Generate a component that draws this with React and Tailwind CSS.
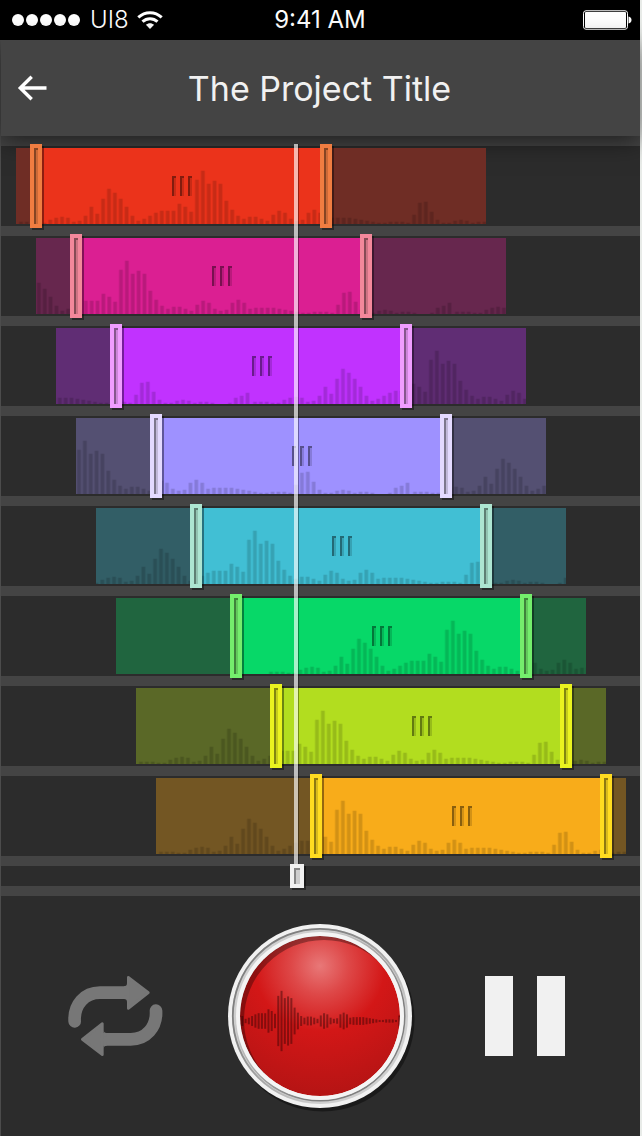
import React from "react";

const LEVELS = [
  2, 2, 2, 1, 1, 4, 6, 7, 6, 2, 3, 8, 17, 10, 25, 35, 31, 25, 17, 8, 3, 5, 8, 11, 13, 13, 13, 20, 17, 12,
  44, 53, 40, 43, 40, 23, 14, 8, 5, 7, 7, 5, 3, 9, 13, 11, 5, 3, 4, 11, 14, 11, 5, 6, 6, 6, 6, 5, 4, 3,
  2, 1, 1, 2, 2, 2, 1, 9, 21, 22, 12, 4, 1, 1, 3, 4, 3, 1, 2, 2, 1, 0, 0, 1, 6, 8, 11,
];
const BAR_PITCH = 88 / 15;
const LOOP_LENGTH = 512;
const CLIP_LENGTH = 470;

const TRACKS = [
  { name: "Track 1", start: 16, trim: 14, wave: 0, body: "bg-[#eb331b]", rest: "bg-[#6f2d25]", grip: "bg-[#f07d41]" },
  { name: "Track 2", start: 36, trim: 34, wave: -96, body: "bg-[#db1f92]", rest: "bg-[#67274e]", grip: "bg-[#f4889b]" },
  { name: "Track 3", start: 56, trim: 54, wave: -318, body: "bg-[#c132ff]", rest: "bg-[#602d74]", grip: "bg-[#f09dff]" },
  { name: "Track 4", start: 76, trim: 74, wave: -178, body: "bg-[#9e91ff]", rest: "bg-[#545072]", grip: "bg-[#e4daff]" },
  { name: "Track 5", start: 96, trim: 94, wave: -28, body: "bg-[#41bfd4]", rest: "bg-[#325e66]", grip: "bg-[#ade5d1]" },
  { name: "Track 6", start: 116, trim: 114, wave: 150, body: "bg-[#07d868]", rest: "bg-[#20653f]", grip: "bg-[#74ee6c]" },
  { name: "Track 7", start: 136, trim: 134, wave: 0, body: "bg-[#b2dd1f]", rest: "bg-[#5a6827]", grip: "bg-[#eaf31f]" },
  { name: "Track 8", start: 156, trim: 154, wave: 0, body: "bg-[#f8ac1a]", rest: "bg-[#735623]", grip: "bg-[#ffdc20]" },
];

function Waveform({ offset }) {
  const bars = [];
  for (let loop = 0; loop < 2; loop++) {
    LEVELS.forEach((level, i) => {
      const x = offset + loop * LOOP_LENGTH + 5 + i * BAR_PITCH;
      if (level > 0 && x > -3 && x < CLIP_LENGTH + 3) bars.push({ x, level });
    });
  }
  return (
    <svg className="absolute inset-0 h-full w-full" viewBox="0 0 470 76" aria-hidden="true">
      {bars.map(({ x, level }) => (
        <g key={x} fill="#000" fillOpacity="0.08">
          <rect x={x - 2.3} y={75.5 - level} width="4.6" height={level + 2} rx="1" />
          <rect x={x - 1.4} y={76 - level} width="2.8" height={level + 2} rx="0.5" />
        </g>
      ))}
    </svg>
  );
}

function TrimHandle({ label, color }) {
  return (
    <button
      type="button"
      aria-label={label}
      className={`h-[84px] w-3 p-1 shadow-[2px_2px_0_rgba(0,0,0,0.4)] ${color}`}
    >
      <span className="block h-full border-l-2 border-t-2 border-black/35 bg-black/15" />
    </button>
  );
}

function Track({ track }) {
  return (
    <li className="h-[90px] border-b-10 border-[#444] py-0.5">
      <div
        className={`relative z-20 h-[76px] w-[470px] ${track.rest}`}
        style={{ marginLeft: track.start - 1 }}
      >
        <div
          className={`absolute inset-y-0 w-[302px] ${track.body}`}
          style={{ left: track.trim }}
        />
        <Waveform offset={track.wave} />
        <div
          className="absolute -inset-y-1 flex w-[302px] items-center justify-between"
          style={{ left: track.trim }}
        >
          <TrimHandle label={`${track.name} start`} color={track.grip} />
          <button type="button" aria-label={`Move ${track.name}`} className="flex gap-1 pl-0.5">
            <span className="h-5 w-1 border-l-2 border-t-2 border-black/35 bg-black/15" />
            <span className="h-5 w-1 border-l-2 border-t-2 border-black/35 bg-black/15" />
            <span className="h-5 w-1 border-l-2 border-t-2 border-black/35 bg-black/15" />
          </button>
          <TrimHandle label={`${track.name} end`} color={track.grip} />
        </div>
      </div>
    </li>
  );
}

function StatusBar() {
  return (
    <div className="grid h-10 grid-cols-3 items-center bg-black text-2xl font-light text-white">
      <div className="flex items-center gap-2 pl-3">
        <div className="flex gap-0.5">
          {[0, 1, 2, 3, 4].map((dot) => (
            <span key={dot} className="h-3 w-3 rounded-full bg-white" />
          ))}
        </div>
        <span className="pl-0.5">UI8</span>
        <svg className="h-[18px] w-[26px]" viewBox="0 0 26 18" fill="none" stroke="#fff" strokeWidth="3" aria-label="Wi-Fi">
          <path d="M1.3 6.4C8 .1 18 .1 24.700 6.400" />
          <path d="M5.500 10.700C9.800 6.700 16.200 6.700 20.500 10.700" />
          <path d="M13 18 8.900 13.800C11.300 11.700 14.700 11.700 17.100 13.800Z" fill="#fff" stroke="none" />
        </svg>
      </div>
      <div className="text-center font-normal">9:41 AM</div>
      <div className="flex justify-end pr-2">
        <svg className="h-5 w-[50px]" viewBox="0 0 50 20" aria-label="Battery full">
          <rect x="1.500" y="0.750" width="44" height="18.500" rx="2.500" fill="none" stroke="#fff" strokeWidth="1" />
          <rect x="3" y="2" width="41" height="16" rx="1" fill="#fff" />
          <path d="M46.500 6.500C48.500 7 49.500 8.300 49.500 10S48.500 13 46.500 13.500Z" fill="#fff" />
        </svg>
      </div>
    </div>
  );
}

function LoopArrow(props) {
  return (
    <g {...props}>
      <path d="M104 214C101 164 134 128 180 128H264" fill="none" stroke="#777" strokeWidth="38" strokeLinecap="round" />
      <path d="M252 109Q261 109 261 100V120H252ZM252 147Q261 147 261 156V136H252Z" fill="#777" />
      <path d="M265 82 325 128 265 175Z" fill="#777" stroke="#777" strokeWidth="8" strokeLinejoin="round" />
    </g>
  );
}

function RecordDial() {
  return (
    <svg className="h-[184px] w-[184px] overflow-visible" viewBox="0 0 184 184" aria-hidden="true">
      <defs>
        <radialGradient id="dial" gradientUnits="userSpaceOnUse" cx="92" cy="42" r="130">
          <stop offset="0" stopColor="#e87878" />
          <stop offset="0.220" stopColor="#de4848" />
          <stop offset="0.500" stopColor="#d31717" />
          <stop offset="1" stopColor="#b51414" />
        </radialGradient>
        <linearGradient id="outer-edge" x1="0" y1="0" x2="1" y2="1">
          <stop offset="0.300" stopColor="#808080" />
          <stop offset="0.750" stopColor="#808080" stopOpacity="0" />
        </linearGradient>
        <linearGradient id="inner-edge" x1="0" y1="0" x2="1" y2="1">
          <stop offset="0.250" stopColor="#808080" stopOpacity="0" />
          <stop offset="0.700" stopColor="#808080" />
        </linearGradient>
        <clipPath id="face">
          <circle cx="92" cy="92" r="80" />
        </clipPath>
      </defs>
      <circle cx="94.500" cy="95.500" r="92" fill="#000" fillOpacity="0.400" />
      <circle cx="92" cy="92" r="92" fill="#f1f1f1" />
      <circle cx="92" cy="92" r="88" fill="#cfcfcf" />
      <circle cx="92" cy="92" r="87.200" fill="none" stroke="url(#outer-edge)" strokeWidth="1.800" />
      <circle cx="92" cy="92" r="84.600" fill="none" stroke="url(#inner-edge)" strokeWidth="1.800" />
      <circle cx="92" cy="92" r="84" fill="#f4f4f4" />
      <g clipPath="url(#face)">
        <circle cx="92" cy="92" r="80" fill="url(#dial)" />
        <path
          d="M-10-10H194V194H-10ZM176 96A80 80 0 1 0 16 96A80 80 0 1 0 176 96Z"
          fill="#000"
          fillOpacity="0.330"
          fillRule="evenodd"
        />
        <g fill="#1a0000" fillOpacity="0.400">
          {LEVELS.slice(19, 68).map((level, i) => (
            <rect
              key={i}
              x={13.300 + i * 3.270}
              y={97 - level * 0.560 - 0.500}
              width="2"
              height={level * 1.120 + 1}
            />
          ))}
        </g>
      </g>
    </svg>
  );
}

export default function App() {
  return (
    <div className="min-h-screen border-r-2 border-[#e8ebe8] bg-[#2c2c2c] font-['Inter','Liberation_Sans',sans-serif]">
      <StatusBar />
      <div className="border-l border-[#4c4c4c]">
        <header className="relative z-10 grid h-24 grid-cols-[64px_1fr_64px] items-center bg-[#444] pr-0.5 shadow-[0_4px_24px_rgba(0,0,0,0.6)]">
          <button type="button" aria-label="Back" className="pl-4">
            <svg className="h-[26px] w-[30px]" viewBox="0 0 30 26" fill="none" stroke="#fff" strokeWidth="3.400" aria-hidden="true">
              <path d="M29.500 13H3M14.700 1.800 3.300 13 14.700 24.200" />
            </svg>
          </button>
          <h1 className="text-center text-[34px] font-normal text-[#f1f1f1]">The Project Title</h1>
        </header>

        <main>
          <section aria-label="Timeline" className="relative border-b-10 border-[#444]">
            <ul className="border-t-10 border-[#444]">
              {TRACKS.map((track) => (
                <Track key={track.name} track={track} />
              ))}
            </ul>
            <div className="h-5" />
            <div className="absolute left-[289px] top-2 z-30 flex h-[744px] flex-col">
              <div className="ml-1 w-1 flex-1 bg-white/65 shadow-[1px_0_0_rgba(0,0,0,0.35)]" />
              <button
                type="button"
                aria-label="Playhead"
                className="h-6 w-3.5 bg-[#f1f1f1] p-1 shadow-[2px_2px_0_rgba(0,0,0,0.4)]"
              >
                <span className="block h-full border-l-2 border-t-2 border-[#858585] bg-[#cdcdcd]" />
              </button>
            </div>
          </section>

          <section
            aria-label="Transport"
            className="grid h-60 grid-cols-[1fr_184px_1fr] items-center justify-items-center pr-0.5"
          >
            <button type="button" aria-label="Loop" className="ml-0.5">
              <svg className="h-[82px] w-[95px]" viewBox="84 75 285 246" aria-hidden="true">
                <LoopArrow />
                <LoopArrow transform="rotate(180 226 198)" />
              </svg>
            </button>
            <button type="button" aria-label="Record" className="rounded-full">
              <RecordDial />
            </button>
            <button type="button" aria-label="Pause" className="flex gap-6">
              <span className="h-20 w-7 bg-[#f1f1f1]" />
              <span className="h-20 w-7 bg-[#f1f1f1]" />
            </button>
          </section>
        </main>
      </div>
    </div>
  );
}
